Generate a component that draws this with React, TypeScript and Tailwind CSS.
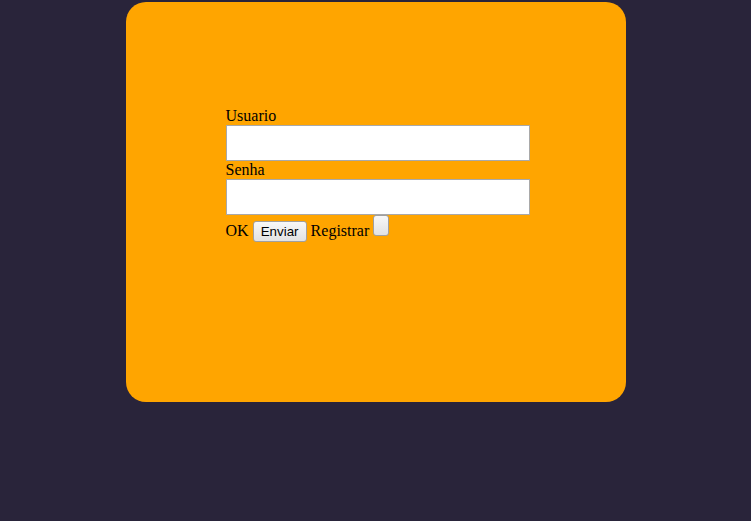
export default function App() {
  return (
    <div className="min-h-[521px] bg-[#29243a] pt-[2px] font-['Liberation_Serif',serif] text-black">
      {/* login card */}
      <div className="mx-auto h-[400px] w-[500px] rounded-[20px] bg-[#ffa500] pl-[100px] pt-[105px]">
        <form className="flex w-[304px] flex-col text-[16px] leading-[18px]">
          <label htmlFor="usuario">Usuario</label>
          <input
            id="usuario"
            type="text"
            className="h-[36px] w-[304px] border border-[#a9a9a9] bg-white px-1"
          />
          <label htmlFor="senha">Senha</label>
          <input
            id="senha"
            type="password"
            className="h-[36px] w-[304px] border border-[#a9a9a9] bg-white px-1"
          />
          <div className="leading-[21px]">
            OK{' '}
            <button
              type="button"
              className="mt-[6px] inline-block h-[21px] w-[54px] rounded-[3px] border border-[#a0a0a0] bg-gradient-to-b from-[#f8f8f8] to-[#e2e2e2] text-center align-baseline font-['Liberation_Sans',Arial,sans-serif] text-[13.33px] leading-[19px]"
            >
              Enviar
            </button>{' '}
            Registrar{' '}
            <button
              type="button"
              className="inline-block h-[21px] w-[16px] rounded-[3px] border border-[#a0a0a0] bg-gradient-to-b from-[#f8f8f8] to-[#e2e2e2] align-[1px]"
            />
          </div>
        </form>
      </div>
    </div>
  )
}
